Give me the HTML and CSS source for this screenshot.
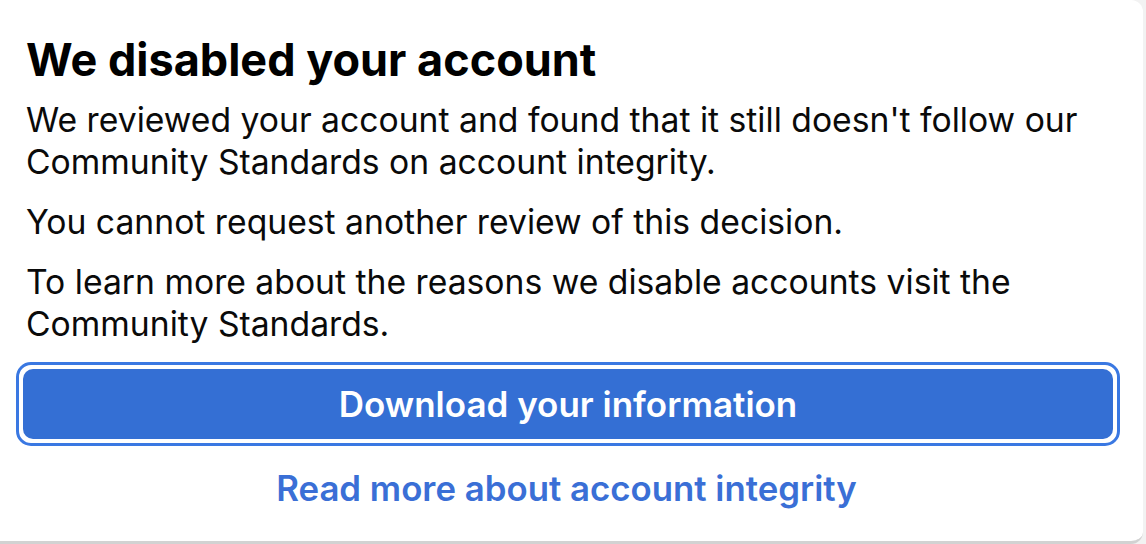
FILE: index.html
```html
<!DOCTYPE html>
<html>
<head>
<meta charset="utf-8">
<link rel="stylesheet" href="styles.css">
</head>
<body>
<div class="card">
  <h1 class="title">We disabled your account</h1>
  <p class="para">We reviewed your account and found that it still doesn't follow our Community Standards on account integrity.</p>
  <p class="para">You cannot request another review of this decision.</p>
  <p class="para last">To learn more about the reasons we disable accounts visit the Community Standards.</p>
  <div class="btn-ring">
    <button class="btn">Download your information</button>
  </div>
  <a class="link">Read more about account integrity</a>
</div>
</body>
</html>
```
FILE: styles.css
```css
html, body {
  margin: 0;
  padding: 0;
  background: #f2f2f2;
}
body {
  width: 1146px;
  height: 544px;
  overflow: hidden;
  font-family: Inter, "Noto Sans", sans-serif;
}
.card {
  box-sizing: border-box;
  width: 1143px;
  height: 544px;
  background: #fff;
  border-radius: 0 12px 12px 0;
  border-bottom: 3px solid #d2d2d2;
  padding: 34px 26px 0 26px;
  display: flex;
  flex-direction: column;
}
.title {
  margin: 0 0 13px 0;
  font-size: 45px;
  font-weight: 700;
  line-height: 52px;
  color: #000;
}
.para {
  margin: 0 0 18px 0;
  font-size: 33.7px;
  line-height: 42px;
  color: #0a0a0a;
}
.para.last {
  margin-bottom: 17px;
}
.btn-ring {
  margin: 0 0 0 -10px;
  width: 1104px;
  box-sizing: border-box;
  border: 3px solid #3a78e2;
  border-radius: 15px;
  padding: 4px;
}
.btn {
  display: block;
  width: 100%;
  height: 70px;
  border: none;
  border-radius: 10px;
  background: #346fd4;
  color: #fff;
  font-family: Inter, "Noto Sans", sans-serif;
  font-size: 35px;
  font-weight: 600;
}
.link {
  margin-top: 21px;
  margin-left: -10px;
  text-align: center;
  font-size: 34.8px;
  line-height: 42px;
  font-weight: 600;
  color: #3a6fd6;
}
```
